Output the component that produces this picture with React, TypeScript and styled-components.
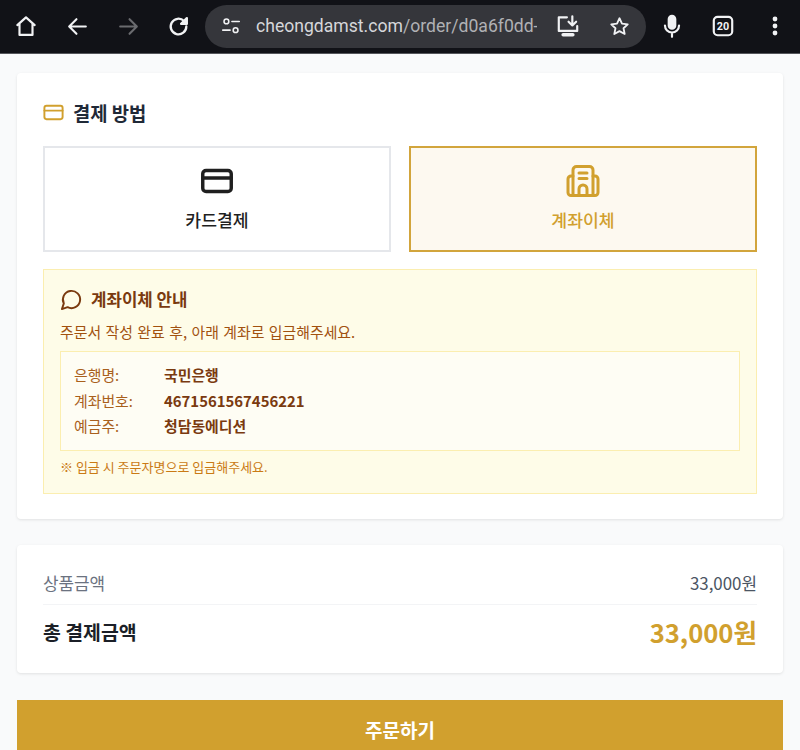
import React from "react";
import styled, { createGlobalStyle } from "styled-components";

const Global = createGlobalStyle`
  html, body { margin: 0; padding: 0; height: 750px; overflow: hidden; background: #f9fafb; }
  * { box-sizing: border-box; }
  body { font-family: "Noto Sans CJK KR", "Noto Sans", sans-serif; }
`;

const Toolbar = styled.header`
  height: 54px; background: #111217; border-bottom: 1px solid #55565b;
  display: flex; align-items: center; padding: 0 0 1px 0; color: #f1f2f4;
`;
const ToolIcon = styled.span<{ $w: number; $dim?: boolean; $ml?: number }>`
  width: ${p => p.$w}px; margin-left: ${p => p.$ml ?? 0}px; flex: none; display: flex; align-items: center; justify-content: center;
  color: ${p => (p.$dim ? "#6a6b6f" : "#f1f2f4")};
`;
const Omnibox = styled.div`
  width: 441px; height: 43px; margin-left: 1px; background: #35363b; border-radius: 22px;
  display: flex; align-items: center; flex: none; padding-left: 15px;
`;
const UrlText = styled.span`
  font-family: Roboto, sans-serif; font-size: 17.6px; color: #c9cacd; width: 281px; margin-left: 14px; flex: none;
  white-space: nowrap; overflow: hidden;
  b { font-weight: 400; color: #d6d7da; }
  i { font-style: normal; color: #b0b1b4; }
`;
const Page = styled.main`
  padding: 19px 17px 0;
  display: flex; flex-direction: column; gap: 26px;
`;
const Card = styled.section`
  background: #fff; border-radius: 4px; box-shadow: 0 1px 3px rgba(0,0,0,0.1);
`;
const PayCard = styled(Card)`
  padding: 25px 26px 26px; height: 446px;
`;
const Title = styled.h2`
  margin: 0 0 19px; height: 29px; display: flex; align-items: center; gap: 8px;
  font-size: 18.8px; font-weight: 700; color: #1f2937; line-height: 29px;
  svg { color: #d1a02e; margin-left: -1px; }
`;
const Methods = styled.div`
  display: grid; grid-template-columns: 348px 348px; gap: 18px;
`;
const Method = styled.button<{ $active?: boolean }>`
  height: 106px; padding: 0; margin: 0; border-radius: 0; font-family: inherit;
  border: 2.5px solid ${p => (p.$active ? "#d2a53c" : "#e5e7eb")};
  background: ${p => (p.$active ? "#fdf9f0" : "#fff")};
  color: ${p => (p.$active ? "#d1a02e" : "#1f1f1f")};
  display: flex; flex-direction: column; align-items: center; gap: 8px; padding-top: 15px;
  font-size: 17.2px; font-weight: 500; line-height: 26px;
`;
const Info = styled.div`
  margin-top: 17px; height: 225px; border: 1px solid #fbeeb0; background: #fefce8; padding: 15px 16px 0;
  color: #854d0e;
`;
const InfoTitle = styled.div`
  display: flex; align-items: center; gap: 8px; font-size: 16.8px; font-weight: 700; color: #7a3a0f;
  height: 28px; svg { color: #7a3a0f; }
`;
const InfoLead = styled.p`
  margin: 7px 0 7px; font-size: 14.9px; line-height: 24px; color: #a1510f; word-spacing: 1.1px;
`;
const Account = styled.dl`
  margin: 0; height: 100px; border: 1px solid #fbeeb0; background: #fefdf4; padding: 10px 13px 0;
  display: grid; grid-template-columns: 90px 1fr; grid-auto-rows: 25.5px; align-items: center;
`;
const AccKey = styled.dt`
  font-size: 14.9px; color: #a9601c;
`;
const AccVal = styled.dd`
  margin: 0; font-size: 14.9px; font-weight: 700; color: #7a3a0f;
`;
const Note = styled.p`
  margin: 6px 0 0; font-size: 13px; line-height: 20px; color: #ca7a14;
`;
const SumCard = styled(Card)`
  padding: 20px 26px 0; height: 128px;
`;
const Row = styled.div`
  display: flex; justify-content: space-between; align-items: center;
`;
const SubRow = styled(Row)`
  height: 40px; border-bottom: 1.5px solid #f3f4f6; font-size: 16.9px; color: #4b5563;
  padding-bottom: 4px;
  span:first-child { color: #6b7280; }
`;
const TotalRow = styled(Row)`
  height: 52px; font-size: 19.4px; font-weight: 700; color: #1b1f27;
`;
const TotalValue = styled.span`
  font-size: 25.6px; color: #d1a02e; font-weight: 700;
`;
const Order = styled.button`
  height: 62px; margin-top: 1px; border: 0; background: #d1a02e; color: #fff; font-family: inherit; padding: 0 0 3px;
  font-size: 19px; font-weight: 700; display: block; width: 100%; border-radius: 0;
`;

const Ic = ({ size = 24, sw = 2, children, vb = "0 0 24 24" }: { size?: number; sw?: number; children: React.ReactNode; vb?: string }) => (
  <svg width={size} height={size} viewBox={vb} fill="none" stroke="currentColor" strokeWidth={sw} strokeLinecap="round" strokeLinejoin="round">{children}</svg>
);
const CardIcon = ({ size, sw }: { size: number; sw: number }) => (
  <Ic size={size} sw={sw}><rect x="2.5" y="5" width="19" height="14" rx="2.2" /><path d="M2.5 10h19" /></Ic>
);

export default function App() {
  return (
    <>
      <Global />
      <Toolbar>
        <ToolIcon $w={51}><Ic size={26} sw={2}><path d="M4 11.2 12 4l8 7.2M6 10v10.2h12V10" /></Ic></ToolIcon>
        <ToolIcon $w={52}><Ic size={25} sw={2}><path d="M20 12H4.5M11 5l-7 7 7 7" /></Ic></ToolIcon>
        <ToolIcon $w={50} $dim><Ic size={25} sw={2}><path d="M4 12h15.5M13 5l7 7-7 7" /></Ic></ToolIcon>
        <ToolIcon $w={51}><Ic size={25} sw={2.2}><path d="M19.5 12a7.5 7.5 0 1 1-2.2-5.3L19.5 9" /><path d="M20 4v5.500h-5.500z" fill="currentColor" /></Ic></ToolIcon>
        <Omnibox>
          <Ic size={22} sw={1.7}><circle cx="7" cy="7" r="2.6" /><path d="M13 7h8M3 16.500h8" /><circle cx="17" cy="16.500" r="2.6" /></Ic>
          <UrlText><b>cheongdamst.com</b><i>/order/d0a6f0dd-</i></UrlText>
          <ToolIcon $w={26} $ml={18}><Ic size={26} sw={2}><path d="M11 4H3.500v12.500h17V12" /><path d="M16 3v8.500M12.500 8l3.500 3.500L19.500 8" /><path d="M7.500 20h9" strokeWidth={3.2} /></Ic></ToolIcon>
          <ToolIcon $w={52} $ml={12}><Ic size={23} sw={1.9}><path d="m12 3.400 2.600 5.600 6 .7-4.400 4.100 1.200 6-5.400-3-5.400 3 1.200-6L3.400 9.700l6-.7z" /></Ic></ToolIcon>
        </Omnibox>
        <ToolIcon $w={51}><Ic size={26} sw={2}><rect x="9" y="2.500" width="6" height="12" rx="3" fill="currentColor" /><path d="M5.500 11.500a6.500 6.500 0 0 0 13 0M12 18v4" /></Ic></ToolIcon>
        <ToolIcon $w={52}><Ic size={26} sw={2}><rect x="3.500" y="3.500" width="17" height="17" rx="3.500" /><text x="12" y="16" fontSize="10" fontWeight="700" textAnchor="middle" fill="currentColor" stroke="none" fontFamily="Roboto, sans-serif">20</text></Ic></ToolIcon>
        <ToolIcon $w={51}><svg width="6" height="20" viewBox="0 0 6 20" fill="currentColor"><circle cx="3" cy="3" r="2.400" /><circle cx="3" cy="10" r="2.400" /><circle cx="3" cy="17" r="2.400" /></svg></ToolIcon>
      </Toolbar>
      <Page>
        <PayCard>
          <Title><CardIcon size={23} sw={2} />결제 방법</Title>
          <Methods>
            <Method><CardIcon size={36} sw={2.300} />카드결제</Method>
            <Method $active>
              <Ic size={36} sw={3} vb="0 0 36 36">
                <path d="M8 32V7a3.500 3.500 0 0 1 3.500-3.500h13A3.500 3.500 0 0 1 28 7v25" />
                <path d="M8 13H6a3 3 0 0 0-3 3v13.500a3 3 0 0 0 3 3h24a3 3 0 0 0 3-3V16a3 3 0 0 0-3-3h-2" />
                <path d="M14 10h8M14 15.500h8M14 32.500V26a4 4 0 0 1 8 0v6.500" />
              </Ic>
              계좌이체
            </Method>
          </Methods>
          <Info>
            <InfoTitle>
              <Ic size={23} sw={2}><path d="M7.900 20A9 9 0 1 0 4 16.100L2 22Z" /></Ic>
              계좌이체 안내
            </InfoTitle>
            <InfoLead>주문서 작성 완료 후, 아래 계좌로 입금해주세요.</InfoLead>
            <Account>
              <AccKey>은행명:</AccKey><AccVal>국민은행</AccVal>
              <AccKey>계좌번호:</AccKey><AccVal>4671561567456221</AccVal>
              <AccKey>예금주:</AccKey><AccVal>청담동에디션</AccVal>
            </Account>
            <Note>※ 입금 시 주문자명으로 입금해주세요.</Note>
          </Info>
        </PayCard>
        <SumCard>
          <SubRow><span>상품금액</span><span>33,000원</span></SubRow>
          <TotalRow><span>총 결제금액</span><TotalValue>33,000원</TotalValue></TotalRow>
        </SumCard>
        <Order>주문하기</Order>
      </Page>
    </>
  );
}
